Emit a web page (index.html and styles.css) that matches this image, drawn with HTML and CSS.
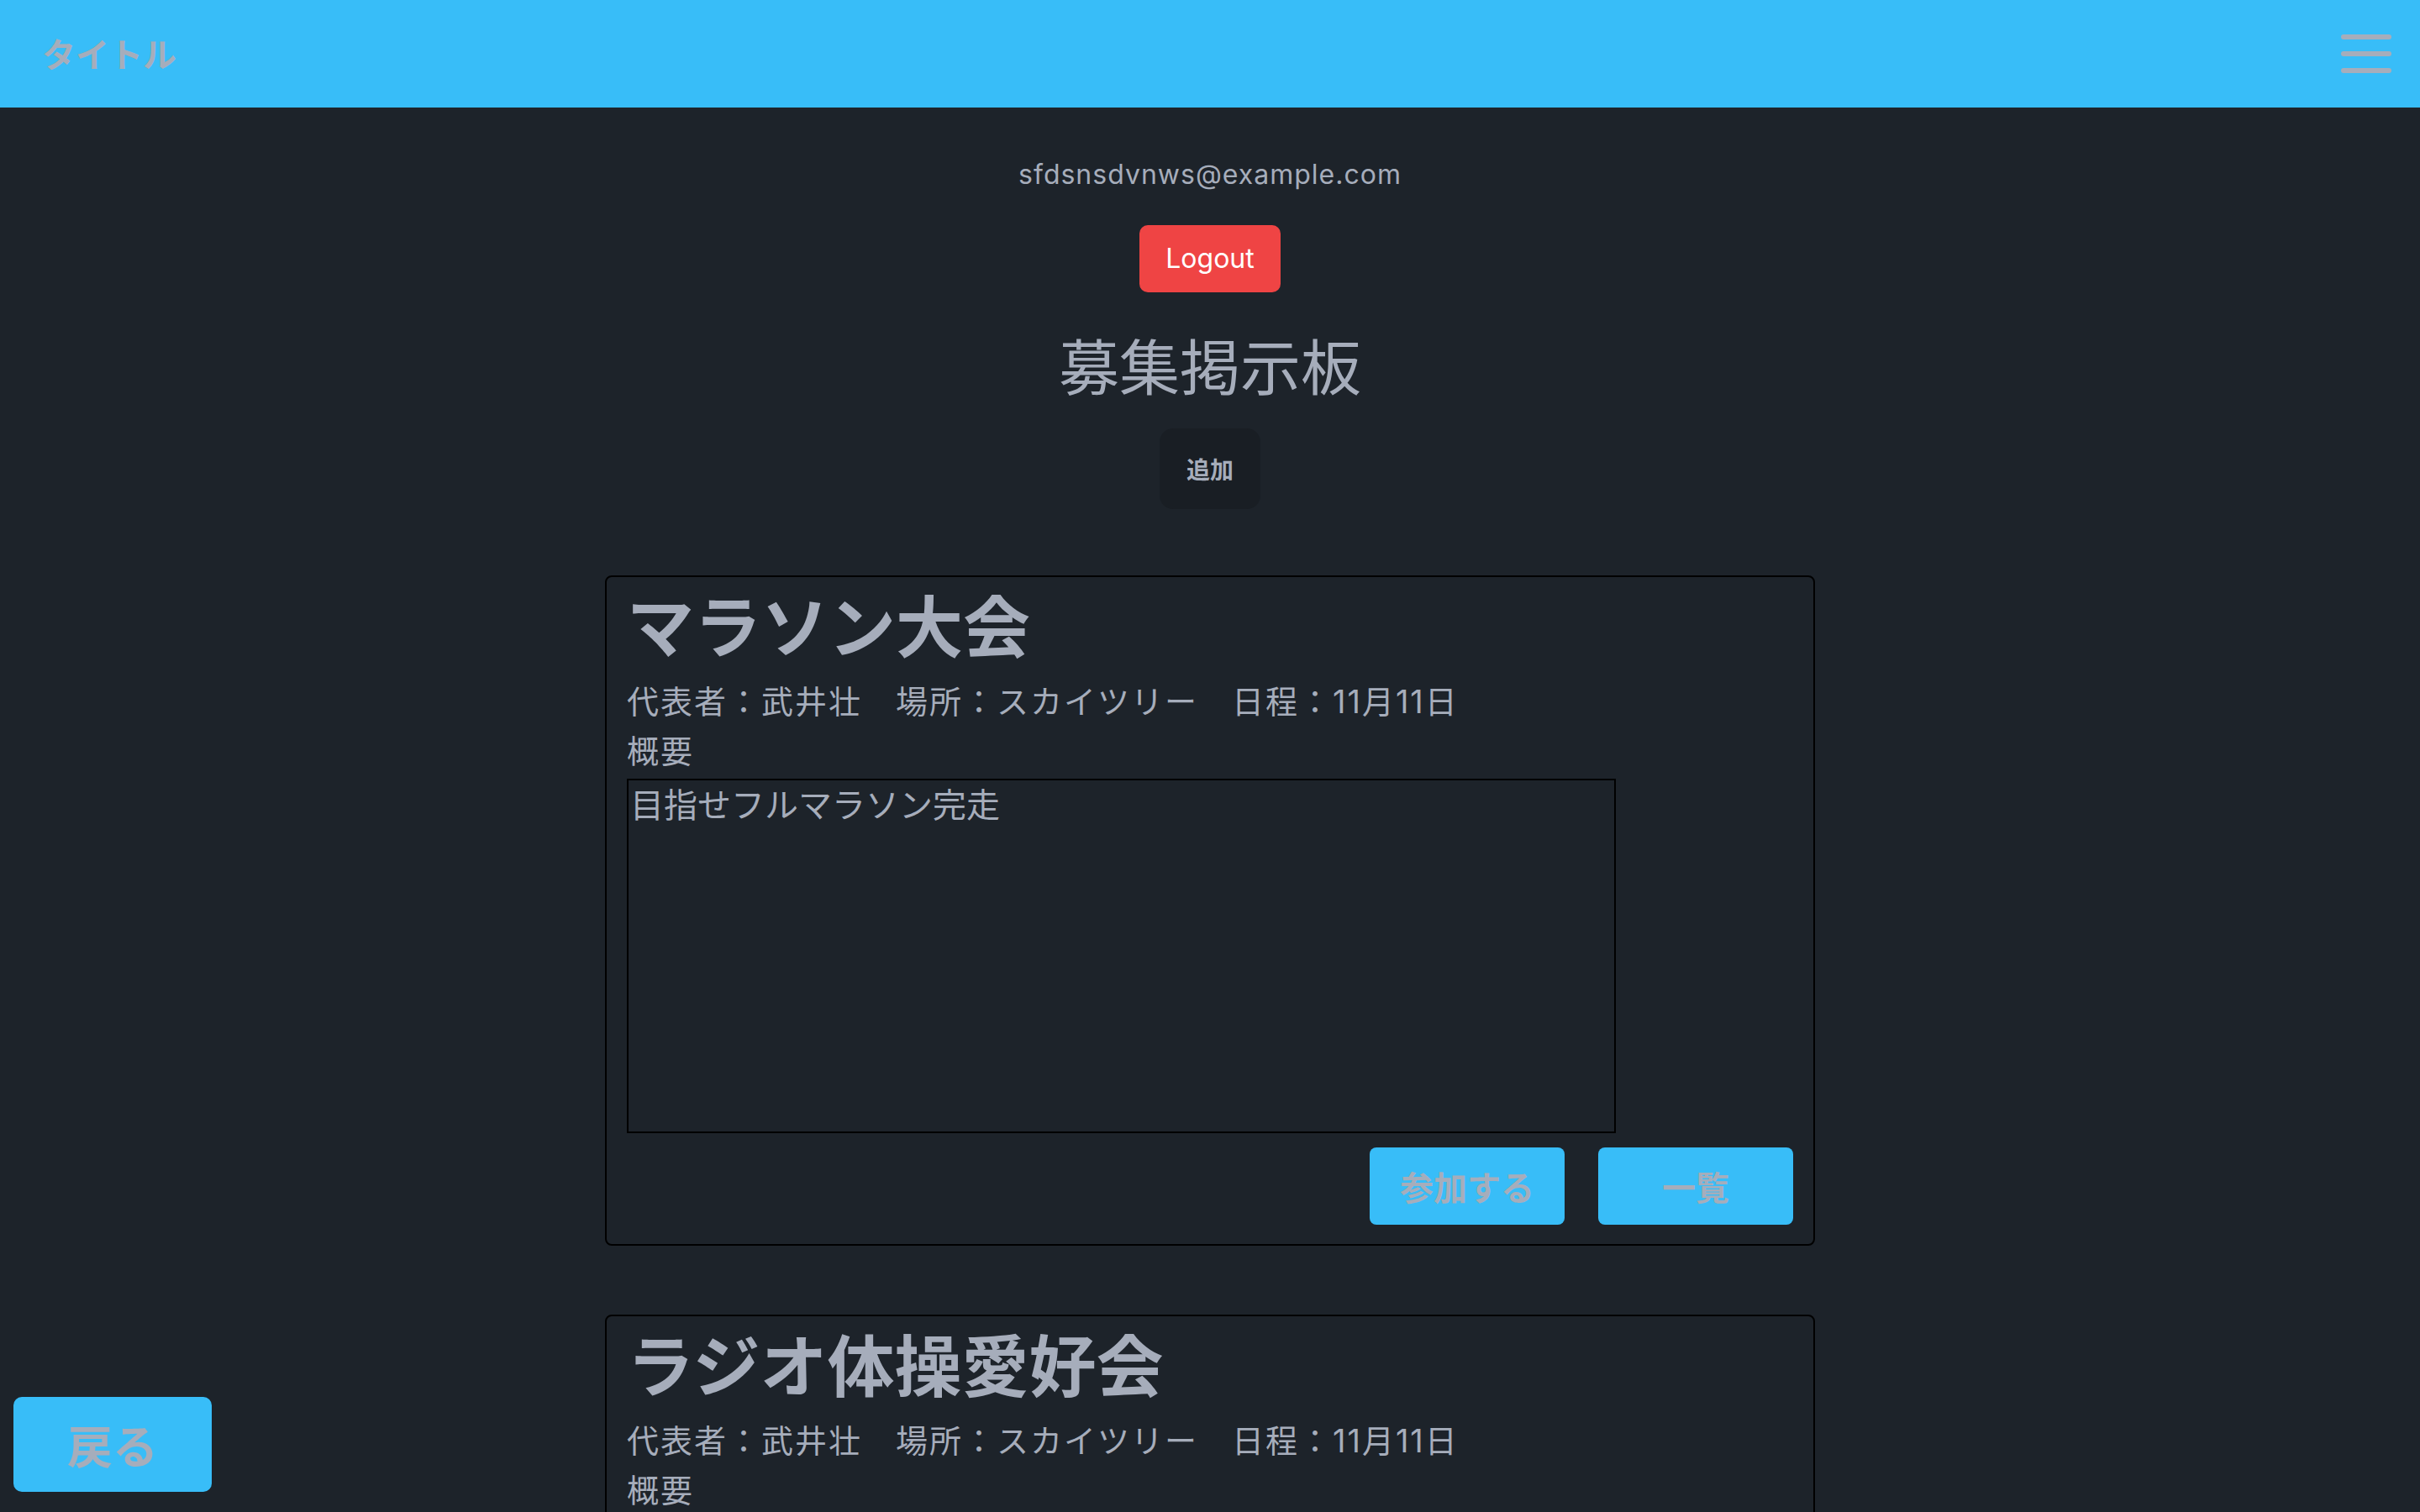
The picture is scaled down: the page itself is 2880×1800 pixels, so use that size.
FILE: index.html
```html
<!DOCTYPE html>
<html lang="ja">
  <head>
    <meta charset="UTF-8" />
    <meta name="viewport" content="width=device-width, initial-scale=1.0" />
    <title>募集掲示板</title>
    <link rel="stylesheet" href="styles.css">
  </head>

  <body>
    <header class="navbar">
      <span class="brand">タイトル</span>
      <button class="menu-btn" type="button" aria-label="menu">
        <svg width="60" height="46" viewBox="0 0 60 46">
          <line x1="3" y1="3" x2="57" y2="3" />
          <line x1="3" y1="23" x2="57" y2="23" />
          <line x1="3" y1="43" x2="57" y2="43" />
        </svg>
      </button>
    </header>

    <main class="board">
      <p class="user-email">sfdsnsdvnws@example.com</p>
      <button class="btn-logout" type="button">Logout</button>
      <h1 class="board-title">募集掲示板</h1>
      <button class="btn-add" type="button">追加</button>

      <section class="post-list">
        <article class="post-card">
          <h2 class="post-title">マラソン大会</h2>
          <p class="post-info">代表者：武井壮　場所：スカイツリー　日程：11月11日</p>
          <p class="post-label">概要</p>
          <textarea class="post-summary" readonly>目指せフルマラソン完走</textarea>
          <div class="post-actions">
            <button class="btn-action" type="button">参加する</button>
            <button class="btn-action" type="button">一覧</button>
          </div>
        </article>

        <article class="post-card">
          <h2 class="post-title">ラジオ体操愛好会</h2>
          <p class="post-info">代表者：武井壮　場所：スカイツリー　日程：11月11日</p>
          <p class="post-label">概要</p>
          <textarea class="post-summary" readonly>毎朝みんなでラジオ体操</textarea>
          <div class="post-actions">
            <button class="btn-action" type="button">参加する</button>
            <button class="btn-action" type="button">一覧</button>
          </div>
        </article>
      </section>
    </main>

    <!-- fixed bottom-left -->
    <button class="btn-back" type="button">戻る</button>
  </body>
</html>
```

FILE: styles.css
```css
body {
  font-family: Inter, "Noto Sans CJK JP", sans-serif;
  background-color: #1d232a;
  color: #a6adbb;
  margin: 0;
  padding: 0;
  min-height: 100vh;
}

button {
  font-family: inherit;
  cursor: pointer;
  border: none;
}

.navbar {
  height: 128px;
  background-color: #38bdf8;
  display: flex;
  align-items: center;
  justify-content: space-between;
  padding: 0 34px 0 50px;
}

.brand {
  font-size: 40px;
  font-weight: 700;
  color: #a6adbb;
  margin-top: -2px;
}

.menu-btn {
  background: none;
  padding: 0;
  display: flex;
}

.menu-btn line {
  stroke: #a6adbb;
  stroke-width: 6;
  stroke-linecap: round;
}

.board {
  display: flex;
  flex-direction: column;
  align-items: center;
  padding: 56px 0 200px;
}

.user-email {
  font-size: 32px;
  line-height: 48px;
  letter-spacing: 1px;
  margin: 0 0 36px;
}

.btn-logout {
  background-color: #ef4444;
  color: white;
  font-size: 32px;
  line-height: 48px;
  padding: 16px 31px;
  border-radius: 10px;
}

.board-title {
  font-size: 72px;
  line-height: 80px;
  font-weight: 400;
  margin: 50px 0 32px;
}

.btn-add {
  height: 96px;
  padding: 0 32px;
  font-size: 28px;
  font-weight: 600;
  background-color: #191e24;
  color: #a6adbb;
  border-radius: 16px;
}

/* Posts */
.post-list {
  width: 1440px;
  display: flex;
  flex-direction: column;
  gap: 82px;
  margin-top: 79px;
}

.post-card {
  border: 2px solid #000;
  border-radius: 8px;
  padding: 20px 24px 23px;
}

.post-title {
  font-size: 80px;
  line-height: 80px;
  font-weight: 700;
  margin: 0 0 19px;
}

.post-info,
.post-label {
  font-size: 38px;
  line-height: 59px;
  letter-spacing: 2px;
  margin: 0;
}

.post-summary {
  display: block;
  box-sizing: border-box;
  width: 1177px;
  height: 422px;
  margin-top: 3px;
  padding: 2px;
  border: 2px solid #000;
  background: transparent;
  color: #a6adbb;
  font-family: inherit;
  font-size: 40px;
  line-height: 1.4;
  resize: none;
  outline: none;
}

.post-actions {
  display: flex;
  justify-content: flex-end;
  gap: 40px;
  margin-top: 17px;
}

.btn-action {
  width: 232px;
  height: 92px;
  background-color: #38bdf8;
  color: #a6adbb;
  font-size: 40px;
  font-weight: 700;
  border-radius: 8px;
}

.btn-back {
  position: fixed;
  left: 16px;
  bottom: 24px;
  width: 236px;
  height: 113px;
  background-color: #38bdf8;
  color: #a6adbb;
  font-size: 54px;
  font-weight: 700;
  border-radius: 10px;
}
```
